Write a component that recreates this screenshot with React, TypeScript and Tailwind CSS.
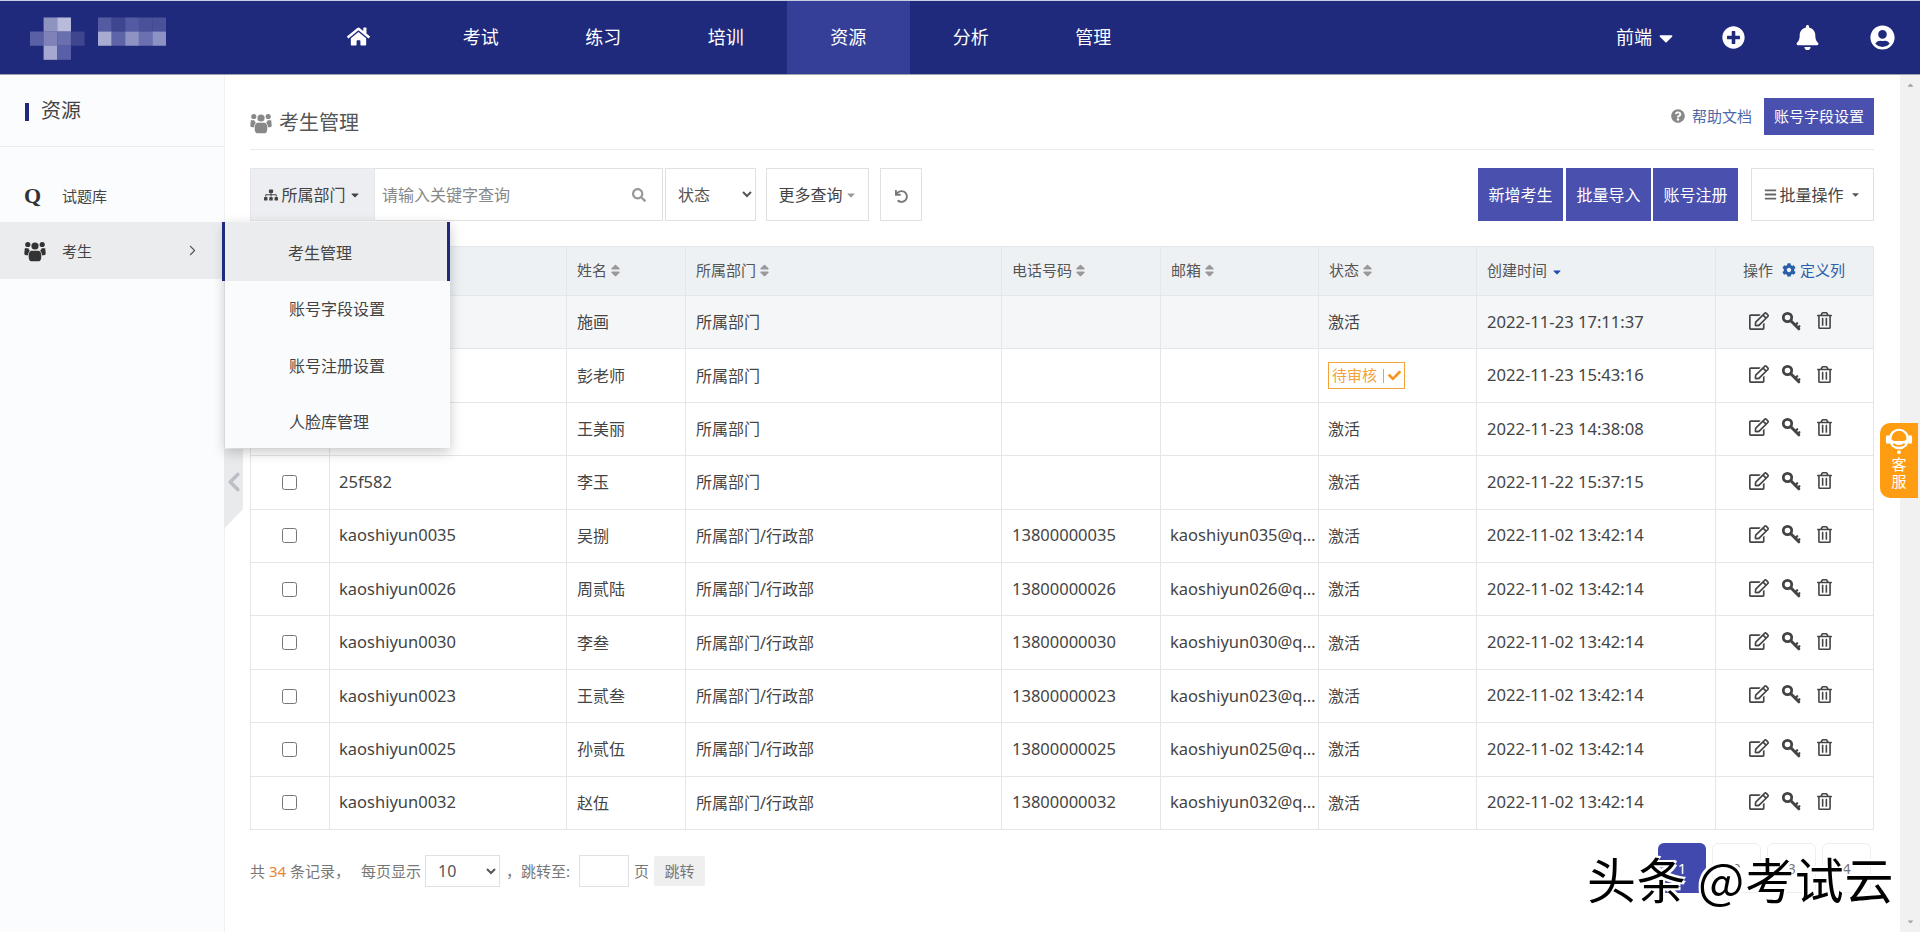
import React from "react";
import {
  FaHome, FaSitemap, FaCaretDown, FaSearch, FaUndo, FaQuestionCircle, FaCog,
  FaCheck, FaBars, FaSort, FaRegEdit, FaRegTrashAlt, FaPlusCircle, FaBell, FaUserCircle,
} from "react-icons/fa";
import { ChevronLeft, ChevronRight } from "lucide-react";

const nav = ["考试", "练习", "培训", "资源", "分析", "管理"];

type Row = { user: string; name: string; dept: string; phone: string; mail: string; status: string; time: string };
const rows: Row[] = [
  { user: "", name: "施画", dept: "所属部门", phone: "", mail: "", status: "激活", time: "2022-11-23 17:11:37" },
  { user: "", name: "彭老师", dept: "所属部门", phone: "", mail: "", status: "待审核", time: "2022-11-23 15:43:16" },
  { user: "", name: "王美丽", dept: "所属部门", phone: "", mail: "", status: "激活", time: "2022-11-23 14:38:08" },
  { user: "25f582", name: "李玉", dept: "所属部门", phone: "", mail: "", status: "激活", time: "2022-11-22 15:37:15" },
  { user: "kaoshiyun0035", name: "吴捌", dept: "所属部门/行政部", phone: "13800000035", mail: "kaoshiyun035@qq.com", status: "激活", time: "2022-11-02 13:42:14" },
  { user: "kaoshiyun0026", name: "周贰陆", dept: "所属部门/行政部", phone: "13800000026", mail: "kaoshiyun026@qq.com", status: "激活", time: "2022-11-02 13:42:14" },
  { user: "kaoshiyun0030", name: "李叁", dept: "所属部门/行政部", phone: "13800000030", mail: "kaoshiyun030@qq.com", status: "激活", time: "2022-11-02 13:42:14" },
  { user: "kaoshiyun0023", name: "王贰叁", dept: "所属部门/行政部", phone: "13800000023", mail: "kaoshiyun023@qq.com", status: "激活", time: "2022-11-02 13:42:14" },
  { user: "kaoshiyun0025", name: "孙贰伍", dept: "所属部门/行政部", phone: "13800000025", mail: "kaoshiyun025@qq.com", status: "激活", time: "2022-11-02 13:42:14" },
  { user: "kaoshiyun0032", name: "赵伍", dept: "所属部门/行政部", phone: "13800000032", mail: "kaoshiyun032@qq.com", status: "激活", time: "2022-11-02 13:42:14" },
];

function Logo() {
  const cells: [number, number, string][] = [
    [1, 0, "#8f93c0"], [2, 0, "#b8bbdc"], [5, 0, "#545ba3"], [6, 0, "#3e4690"], [7, 0, "#545ba3"], [8, 0, "#4a5199"], [9, 0, "#4a5199"],
    [0, 1, "#5a60a5"], [1, 1, "#7e82b8"], [2, 1, "#6a6fae"], [3, 1, "#3f458f"], [5, 1, "#a9acd2"], [6, 1, "#5e64a8"], [7, 1, "#8f93c4"], [8, 1, "#6a70b0"], [9, 1, "#8d92c4"],
    [1, 2, "#a5a8d0"], [2, 2, "#5a60a8"],
  ];
  return (
    <svg width="136" height="48" viewBox="0 0 150 47.5" className="ml-[30px] mt-[3px]" style={{ filter: "blur(0.7px)" }}>
      {cells.map(([x, y, c], i) => (
        <rect key={i} x={x * 15} y={y * 15.5} width="15.2" height="15.7" fill={c} />
      ))}
    </svg>
  );
}

function UsersIcon({ className, size = 22 }: { className?: string; size?: number }) {
  return (
    <svg width={size} height={size} viewBox="0 0 22 22" fill="currentColor" className={className}>
      <circle cx="3.800" cy="4.500" r="2.600" />
      <circle cx="18.200" cy="4.500" r="2.600" />
      <circle cx="11" cy="6" r="3.600" />
      <path d="M.8 8.200h3.600c.2 1.200.8 2 1.600 2.600-1.200 1-1.800 2.400-1.900 4.400H2C.9 15.200.3 14.400.3 13.200z" />
      <path d="M21.200 8.200h-3.600c-.2 1.200-.8 2-1.600 2.600 1.200 1 1.800 2.400 1.900 4.400H20c1.100 0 1.700-.8 1.700-2z" />
      <path d="M7.200 10.800h7.600c1.900.7 2.500 2.600 2.500 5.800 0 3-.9 4.700-2.600 4.700H7.300c-1.700 0-2.600-1.700-2.600-4.700 0-3.200.6-5.100 2.500-5.800z" />
    </svg>
  );
}

function KeyIcon() {
  return (
    <svg width="20" height="20" viewBox="0 0 20 20" fill="none" stroke="currentColor" className="ml-[12px]">
      <circle cx="6.500" cy="6.500" r="4.200" strokeWidth="2.800" />
      <path d="M9.800 9.800 17.800 17.800" strokeWidth="3" strokeLinecap="round" />
      <path d="M14.200 14.200 16.200 12.200M16.800 16.800 18.400 15.200" strokeWidth="2.200" strokeLinecap="round" />
    </svg>
  );
}

function ServiceIcon() {
  return (
    <svg width="28" height="29" viewBox="0 0 30 31" fill="none">
      <circle cx="15" cy="14" r="11" fill="#fff" />
      <path d="M7 13a8 8 0 0 1 16 0c0 3-3 3-8 3s-8 0-8-3z" fill="#ff9d12" />
      <path d="M9 19c2 3 10 3 12 0" stroke="#ff9d12" strokeWidth="2" />
      <rect x="1" y="10" width="4" height="9" rx="2" fill="#fff" />
      <rect x="25" y="10" width="4" height="9" rx="2" fill="#fff" />
      <circle cx="15" cy="28" r="2" fill="#fff" />
    </svg>
  );
}

function Th({ children }: { children?: React.ReactNode }) {
  return <th className="border border-[#e4e7ea] px-[10px] pb-[2px] text-left text-[15px] font-normal text-[#555]">{children}</th>;
}

function Sortable({ label }: { label: string }) {
  return (
    <span className="inline-flex items-center gap-px">
      {label}
      <FaSort className="text-[15px] text-[#999]" />
    </span>
  );
}

const chinese = "font-['Noto_Sans','Noto_Sans_CJK_SC',sans-serif]";

export default function App() {
  return (
    <div className={`relative flex h-[932px] w-[1920px] flex-col overflow-hidden bg-white text-[16px] text-[#444] ${chinese}`}>
      {/* header */}
      <header className="flex h-[75px] shrink-0 items-center border-t border-t-[#c9cce4] border-b border-b-[#9fa1a8] bg-[#1f2a7c] text-white">
        <div className="w-[297px] shrink-0">
          <Logo />
        </div>
        <nav className="flex h-full">
          <a className="flex h-full w-[122.5px] items-center justify-center pb-[3px] text-[23px]">
            <FaHome />
          </a>
          {nav.map((n) => (
            <a key={n} className={`flex h-full w-[122.5px] items-center justify-center pb-[1px] text-[18px] ${n === "资源" ? "bg-[#363f97]" : ""}`}>
              {n}
            </a>
          ))}
        </nav>
        <div className="ml-auto flex items-center pr-[25px]">
          <span className="text-[18px]">前端</span>
          <FaCaretDown className="ml-[3px] text-[22px]" />
          <FaPlusCircle className="ml-[45px] text-[23px]" />
          <FaBell className="ml-[50px] text-[25px]" />
          <FaUserCircle className="ml-[50px] text-[25px]" />
        </div>
      </header>

      <div className="flex min-h-0 flex-1">
        {/* sidebar */}
        <aside className="relative w-[225px] shrink-0 border-r border-r-[#eef0f2] bg-[#fbfcfd]">
          <div className="flex h-[72px] items-center border-b border-b-[#e9ebee] pl-[25px]">
            <span className="mr-[12px] mt-[2px] h-[18px] w-[4px] bg-[#1f2a7c]" />
            <span className="text-[20px] text-[#444]">资源</span>
          </div>
          <div className="mt-[23px] flex h-[52px] items-center pl-[24px]">
            <span className="w-[38px] font-['Liberation_Serif',serif] text-[22px] font-bold leading-none text-[#333]">Q</span>
            <span className="text-[15px]">试题库</span>
          </div>
          <div className="flex h-[57px] w-[222px] items-center bg-[#ebecee] pl-[24px]">
            <UsersIcon className="mr-[16px] text-[#333]" />
            <span className="pt-[2px] text-[15px]">考生</span>
            <ChevronRight size={17} strokeWidth={1.500} className="ml-auto mr-[21px] text-[#555]" />
          </div>

          {/* collapse handle */}
          <div className="absolute left-[224px] top-[374px] flex h-[80px] w-[19px] items-start justify-center bg-[#e9eaec] pt-[18px] [clip-path:polygon(0_0,100%_0,100%_75%,0_100%)]">
            <ChevronLeft size={30} strokeWidth={3} className="shrink-0 text-[#bcbfc5]" />
          </div>

          {/* flyout menu */}
          <div className="absolute left-[225px] top-[147px] z-20 w-[225px] bg-[#fafbfc] text-[16px] shadow-[0_4px_12px_rgba(0,0,0,0.22)]">
            <div className="-ml-[3px] flex h-[59px] items-center border-x-[3px] border-x-[#1f2a7c] bg-[#ebecee] pl-[63px] pt-[2px]">考生管理</div>
            <div className="flex h-[56px] items-center pl-[64px]">账号字段设置</div>
            <div className="flex h-[57px] items-center pl-[64px]">账号注册设置</div>
            <div className="flex h-[54px] items-center pl-[64px] pt-[2px]">人脸库管理</div>
          </div>
        </aside>

        {/* main */}
        <main className="min-w-0 flex-1 pl-[25px] pr-[26px]">
          <div className="flex h-[75px] items-center justify-between border-b border-b-[#e9ebee] pb-[1px] pt-[21px]">
            <div className="flex items-center pt-[2px] text-[#555]">
              <UsersIcon className="mr-[7px] text-[#888]" />
              <span className="text-[20px]">考生管理</span>
            </div>
            <div className="mb-[12px] flex items-center">
              <FaQuestionCircle className="mr-[7px] text-[14px] text-[#888]" />
              <span className="text-[15px] text-[#4d6aa8]">帮助文档</span>
              <button className="ml-[12px] h-[37px] w-[110px] bg-[#4a50ae] text-[15px] text-white">账号字段设置</button>
            </div>
          </div>

          <div className="mt-[18px] flex h-[53px] items-stretch">
            <div className="flex w-[125px] items-center justify-center gap-[3px] border border-[#e4e7ea] bg-[#eceef1] text-[16px] text-[#444]">
              <FaSitemap className="text-[14px]" />
              所属部门
              <FaCaretDown className="text-[12px]" />
            </div>
            <div className="flex w-[288px] items-center border border-l-0 border-[#dfe1e4] bg-white pl-[7px] pr-[16px]">
              <input placeholder="请输入关键字查询" className="min-w-0 flex-1 bg-transparent text-[16px] outline-none placeholder:text-[#888]" />
              <FaSearch className="text-[14px] text-[#999]" />
            </div>
            <select defaultValue="状态" className="ml-[2px] w-[91px] border border-[#dfe1e4] bg-white pl-[8px] text-[16px] text-[#555]">
              <option>状态</option>
            </select>
            <button className="ml-[10px] flex w-[103px] items-center justify-center gap-[2px] border border-[#dfe1e4] text-[16px]">
              更多查询
              <FaCaretDown className="text-[12px] text-[#999]" />
            </button>
            <button className="ml-[11px] flex w-[42px] items-center justify-center border border-[#dfe1e4] pt-[4px] text-[#777]">
              <FaUndo className="text-[13px]" />
            </button>
            <button className="ml-auto w-[85px] bg-[#4a50ae] text-[16px] text-white">新增考生</button>
            <button className="ml-[3px] w-[85px] bg-[#4a50ae] text-[16px] text-white">批量导入</button>
            <button className="ml-[2px] w-[85px] bg-[#4a50ae] text-[16px] text-white">账号注册</button>
            <button className="ml-[13px] flex w-[123px] items-center justify-center border border-[#dfe1e4] text-[16px]">
              <FaBars className="mr-[2px] text-[13px] text-[#666]" />
              批量操作
              <FaCaretDown className="ml-[6px] text-[11px] text-[#555]" />
            </button>
          </div>

          <table className="mt-[25px] w-[1623px] table-fixed border-collapse">
            <colgroup>
              <col className="w-[79px]" />
              <col className="w-[237px]" />
              <col className="w-[119px]" />
              <col className="w-[316px]" />
              <col className="w-[159px]" />
              <col className="w-[158px]" />
              <col className="w-[158px]" />
              <col className="w-[239px]" />
              <col className="w-[158px]" />
            </colgroup>
            <thead>
              <tr className="h-[49px] bg-[#eef1f4]">
                <Th />
                <Th />
                <Th><Sortable label="姓名" /></Th>
                <Th><Sortable label="所属部门" /></Th>
                <Th><Sortable label="电话号码" /></Th>
                <Th><Sortable label="邮箱" /></Th>
                <Th><Sortable label="状态" /></Th>
                <Th>
                  <span className="inline-flex items-center gap-[4px]">
                    创建时间
                    <FaCaretDown className="mt-[4px] text-[12px] text-[#1f4bb0]" />
                  </span>
                </Th>
                <Th>
                  <span className="ml-[17px] inline-flex items-center whitespace-nowrap">
                    操作
                    <FaCog className="ml-[9px] mr-[4px] text-[14px] text-[#2b5ea8]" />
                    <span className="text-[#2b5ea8]">定义列</span>
                  </span>
                </Th>
              </tr>
            </thead>
            <tbody>
              {rows.map((r, i) => (
                <tr key={i} className={`h-[53.4px] ${i === 0 ? "bg-[#f4f6f8]" : "bg-white"}`}>
                  <td className="border border-[#e4e7ea] pr-[2px] text-center align-middle">
                    <input type="checkbox" className="mb-[3px] h-[15px] w-[15px] align-middle" />
                  </td>
                  <td className="border border-[#e4e7ea] px-[9px] text-[16.500px]">{r.user}</td>
                  <td className="border border-[#e4e7ea] px-[10px]">{r.name}</td>
                  <td className="border border-[#e4e7ea] px-[10px]">{r.dept}</td>
                  <td className="border border-[#e4e7ea] px-[10px] text-[16.500px]">{r.phone}</td>
                  <td className="truncate border border-[#e4e7ea] pl-[9px] text-[16.500px]">{r.mail}</td>
                  <td className="border border-[#e4e7ea] px-[9px]">
                    {r.status === "待审核" ? (
                      <span className="inline-flex h-[27px] w-[77px] items-center border border-[#f3a23a] pl-[3px] text-[15px] text-[#f3a23a]">
                        待审核
                        <span className="ml-[6px] mr-[4px] h-[14px] w-px bg-[#f3a23a]" />
                        <FaCheck className="text-[13px] text-[#f7931e]" />
                      </span>
                    ) : (
                      r.status
                    )}
                  </td>
                  <td className="border border-[#e4e7ea] px-[10px] text-[16.600px]">{r.time}</td>
                  <td className="border border-[#e4e7ea]">
                    <div className="flex items-center pb-[3px] pl-[33px] text-[#444]">
                      <FaRegEdit className="text-[20px]" />
                      <KeyIcon />
                      <FaRegTrashAlt className="ml-[15px] text-[17px]" />
                    </div>
                  </td>
                </tr>
              ))}
            </tbody>
          </table>

          <div className="mt-[13px] flex h-[50px] items-center justify-between text-[15px] text-[#777]">
            <div className="flex items-center pt-[6px]">
              <span>共 <span className="text-[#e8832a]">34</span> 条记录，</span>
              <span className="ml-[11px]">每页显示</span>
              <select defaultValue="10" className="ml-[4px] h-[32px] w-[75px] border border-[#dfe1e4] bg-white pl-[8px] text-[16px] text-[#555]">
                <option>10</option>
              </select>
              <span className="ml-[6px]">，跳转至:</span>
              <input className="ml-[9px] h-[32px] w-[50px] border border-[#dfe1e4]" />
              <span className="ml-[5px]">页</span>
              <button className="ml-[5px] h-[30px] w-[51px] rounded-[2px] bg-[#efefef] text-[#777]">跳转</button>
            </div>
            <div className="flex items-center gap-[6px] pr-[3px]">
              <span className="flex h-[50px] w-[48px] items-center justify-center rounded-[6px] bg-[#4148ae] text-white">1</span>
              {[2, 3, 4].map((p) => (
                <span key={p} className="flex h-[50px] w-[49px] items-center justify-center rounded-[6px] border border-[#eceef0] text-[#777]">{p}</span>
              ))}
            </div>
          </div>
        </main>

        {/* scrollbar */}
        <div className="flex w-[20px] shrink-0 flex-col items-center justify-between bg-[#f1f1f1] py-[6px] text-[9px] text-[#a3a3a3]">
          <FaCaretDown className="rotate-180" />
          <FaCaretDown />
        </div>
      </div>

      {/* customer-service tab */}
      <div className="absolute left-[1880px] top-[423px] z-10 flex h-[75px] w-[38px] flex-col items-center rounded-l-[10px] bg-[#ff9d12] pt-[3px] text-[15px] leading-[18px] text-white">
        <ServiceIcon />
        <span>客</span>
        <span className="-mt-[1px]">服</span>
      </div>

      {/* watermark */}
      <div className="absolute left-[1587px] top-[848px] z-30 whitespace-nowrap font-['Noto_Sans_CJK_SC',sans-serif] text-[49px] leading-[60px] tracking-[0.7px] text-black [text-shadow:2px_2px_0_#fff,-2px_-2px_0_#fff,2px_-2px_0_#fff,-2px_2px_0_#fff]">
        头条 @考试云
      </div>
    </div>
  );
}
